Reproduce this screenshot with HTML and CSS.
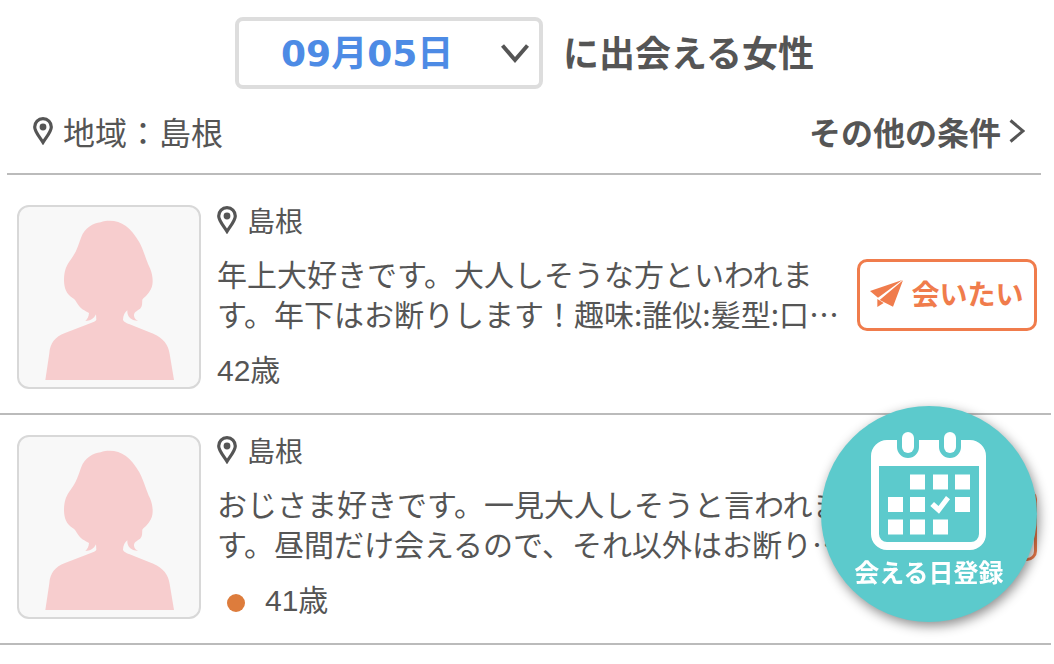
FILE: index.html
```html
<!DOCTYPE html>
<html lang="ja">
<head>
    <meta charset="UTF-8">
    <meta name="viewport" content="width=device-width, initial-scale=1.0">
    <title>09月05日に出会える女性</title>
    <link rel="stylesheet" href="styles.css">
</head>
<body>

    <!-- Shared icons -->
    <svg class="sprite" aria-hidden="true">
        <symbol id="pin" viewBox="0 0 20 28">
            <path d="M10 1.700C5.200 1.700 1.700 5.300 1.700 10c0 4.600 4.500 9.400 8.300 15.400 3.800-6 8.300-10.800 8.300-15.400 0-4.700-3.500-8.300-8.300-8.300z" fill="none" stroke="currentColor" stroke-width="3.200"/>
            <circle cx="10" cy="10" r="3.400" fill="currentColor"/>
        </symbol>
        <symbol id="plane" viewBox="0 0 99 81">
            <path d="M0 33L97 0 24 53zM99 1L69 80 29 60zM22 57L41 69 22 81z" fill="currentColor"/>
        </symbol>
        <symbol id="woman" viewBox="57 36 540 540">
            <path fill="#f7cdce" d="M329 77C365 77 393 97 418 142C433 171 438 195 450 220C462 250 460 275 448 290C440 303 430 308 427 314C426 325 428 335 418 343C408 350 402 352 402 362C403 370 408 374 414 377C400 378 388 370 384 360C382 355 382 350 382 346C374 352 370 360 369 374C372 382 380 384 400 392L460 416C490 430 505 448 509 477L522 555H136L148 475C150 445 165 425 195 414L265 387C280 381 288 378 289 374L288 358C282 372 270 377 256 378C262 372 266 366 267 354C262 350 245 345 235 330C228 320 226 313 218 309C200 298 192 280 192 255C192 225 200 210 212 194C230 170 235 150 243 128C255 98 280 84 302 82C310 78 320 77 329 77Z"/>
        </symbol>
    </svg>

    <div class="page">
        <header class="date-header">
            <div class="date-select">
                <select aria-label="日付">
                    <option>09月05日</option>
                </select>
                <svg class="arrow" viewBox="0 0 28 20" aria-hidden="true"><path d="M1.500 1.500L14 16 26.500 1.500" fill="none" stroke="currentColor" stroke-width="4"/></svg>
            </div>
            <h1>に出会える女性</h1>
        </header>

        <div class="search-bar">
            <p class="area"><svg class="pin"><use href="#pin"/></svg>地域：島根</p>
            <a href="#" class="more-link">その他の条件<svg class="chevron" viewBox="0 0 16 24" aria-hidden="true"><path d="M1.500 1.500L14 12 1.500 22.500" fill="none" stroke="currentColor" stroke-width="3"/></svg></a>
        </div>

        <ul class="user-list">
            <li class="user-item">
                <div class="avatar"><svg role="img" aria-label="女性"><use href="#woman"/></svg></div>
                <div class="user-info">
                    <p class="user-area"><svg class="pin"><use href="#pin"/></svg>島根</p>
                    <p class="user-text">年上大好きです。大人しそうな方といわれま<br>す。年下はお断りします！趣味:誰似:髪型:口…</p>
                    <p class="user-age">42歳</p>
                </div>
                <button type="button" class="meet-btn"><svg class="plane"><use href="#plane"/></svg>会いたい</button>
            </li>
            <li class="user-item">
                <div class="avatar"><svg role="img" aria-label="女性"><use href="#woman"/></svg></div>
                <div class="user-info">
                    <p class="user-area"><svg class="pin"><use href="#pin"/></svg>島根</p>
                    <p class="user-text">おじさま好きです。一見大人しそうと言われま<br>す。昼間だけ会えるので、それ以外はお断り…</p>
                    <p class="user-age"><span class="status"></span>41歳</p>
                </div>
                <button type="button" class="meet-btn"><svg class="plane"><use href="#plane"/></svg>会いたい</button>
            </li>
        </ul>
    </div>

    <a href="#" class="register-btn">
        <svg class="calendar" viewBox="0 0 116 118" aria-hidden="true">
            <path fill="#fff" fill-rule="evenodd" d="M16 8H26V15A11 11 0 0 0 48 15V8H68V15A11 11 0 0 0 90 15V8H99A16 16 0 0 1 115 24V102A16 16 0 0 1 99 118H16A16 16 0 0 1 0 102V24A16 16 0 0 1 16 8zM8 34V102A8 8 0 0 0 16 110H100A8 8 0 0 0 108 102V34z"/>
            <rect x="31" y="0" width="12" height="21" rx="6" fill="#fff"/>
            <rect x="73" y="0" width="12" height="21" rx="6" fill="#fff"/>
            <path fill="#fff" d="M39 42.500h15v15h-15zM62 42.500h15v15h-15zM84 42.500h15v15h-15zM17 65h15v15h-15zM39 65h15v15h-15zM84 65h15v15h-15zM17 87.500h15v15h-15zM39 87.500h15v15h-15zM62 87.500h15v15h-15z"/>
            <path fill="#fff" d="M59.300 74L63 70l4.500 4L75 64l4 3.300L68 81.700z"/>
        </svg>
        <span>会える日登録</span>
    </a>

</body>
</html>
```

FILE: styles.css
```css
:root {
    --text-color: #555555;
    --line-color: #bbbbbb;
    --blue-color: #4d8be5;
    --orange-color: #f07c4c;
    --teal-color: #5ccacc;
}

* {
    box-sizing: border-box;
}

body {
    margin: 0;
    background-color: #ffffff;
    color: var(--text-color);
    font-family: "Noto Sans CJK JP", sans-serif;
}

h1, p, ul {
    margin: 0;
    padding: 0;
}

svg {
    display: block;
    flex-shrink: 0;
}

a {
    text-decoration: none;
}

.sprite {
    position: absolute;
    width: 0;
    height: 0;
}

.page {
    margin-right: 3px;
}

.pin {
    width: 20px;
    height: 28px;
}

/* Date header */
.date-header {
    display: flex;
    justify-content: center;
    align-items: center;
    gap: 20px;
    padding: 17px 2px 0 0;
}
.date-header h1 {
    padding-bottom: 4px;
    font-size: 36px;
    line-height: 68px;
    font-weight: bold;
}
.date-select {
    position: relative;
}
.date-select select {
    display: block;
    width: 308px;
    height: 72px;
    padding: 0 42px;
    appearance: none;
    border: 4px solid #dddddd;
    border-radius: 8px;
    background-color: #ffffff;
    color: var(--blue-color);
    font-family: "DejaVu Sans", "Noto Sans CJK JP", sans-serif;
    font-size: 36px;
    font-weight: bold;
}
.date-select .arrow {
    position: absolute;
    top: 27px;
    right: 14px;
    width: 28px;
    height: 20px;
    pointer-events: none;
}

/* Search conditions */
.search-bar {
    display: flex;
    justify-content: space-between;
    align-items: center;
    margin: 0 10px 0 7px;
    padding: 18px 16px 18px 26px;
    border-bottom: 2px solid var(--line-color);
    font-size: 32px;
    line-height: 48px;
}
.area, .more-link {
    display: flex;
    align-items: center;
    gap: 10px;
}
.more-link {
    gap: 8px;
    color: inherit;
    font-weight: bold;
}
.chevron {
    width: 16px;
    height: 24px;
}

/* User list */
.user-list {
    list-style: none;
    padding-top: 10px;
}
.user-item {
    display: grid;
    grid-template-columns: 184px 1fr 180px;
    align-items: start;
    padding: 20px 14px 22px 17px;
    border-bottom: 2px solid var(--line-color);
}
.avatar {
    border: 2px solid #d8d8d8;
    border-radius: 12px;
    background-color: #f8f8f8;
}
.avatar svg {
    width: 100%;
    height: 180px;
}
.user-info {
    display: flex;
    flex-direction: column;
    gap: 18px;
    padding-left: 16px;
}
.user-area {
    display: flex;
    align-items: center;
    gap: 10px;
    font-size: 28px;
    line-height: 30px;
}
.user-text {
    font-size: 30px;
    line-height: 40px;
}
.user-age {
    display: flex;
    align-items: center;
    font-family: "Liberation Sans", "Noto Sans CJK JP", sans-serif;
    font-size: 30px;
    line-height: 40px;
}
.status {
    width: 18px;
    height: 18px;
    margin: 4px 20px 0 10px;
    border-radius: 50%;
    background-color: #dd7c3c;
}
.meet-btn {
    display: flex;
    justify-content: center;
    align-items: center;
    gap: 8px;
    height: 72px;
    margin-top: 54px;
    padding: 0 0 4px;
    border: 3px solid var(--orange-color);
    border-radius: 10px;
    background-color: #ffffff;
    color: var(--orange-color);
    font-family: inherit;
    font-size: 28px;
    font-weight: bold;
    white-space: nowrap;
}
.plane {
    width: 33px;
    height: 27px;
}

/* Floating register button */
.register-btn {
    position: fixed;
    right: 17px;
    bottom: 42px;
    display: flex;
    flex-direction: column;
    align-items: center;
    gap: 6px;
    width: 216px;
    height: 216px;
    padding-top: 26px;
    border-radius: 50%;
    background-color: var(--teal-color);
    box-shadow: 2px 4px 12px rgba(0, 0, 0, 0.45);
    color: #ffffff;
    font-size: 25px;
    line-height: 30px;
    font-weight: bold;
}
.calendar {
    width: 116px;
    height: 118px;
}
```
